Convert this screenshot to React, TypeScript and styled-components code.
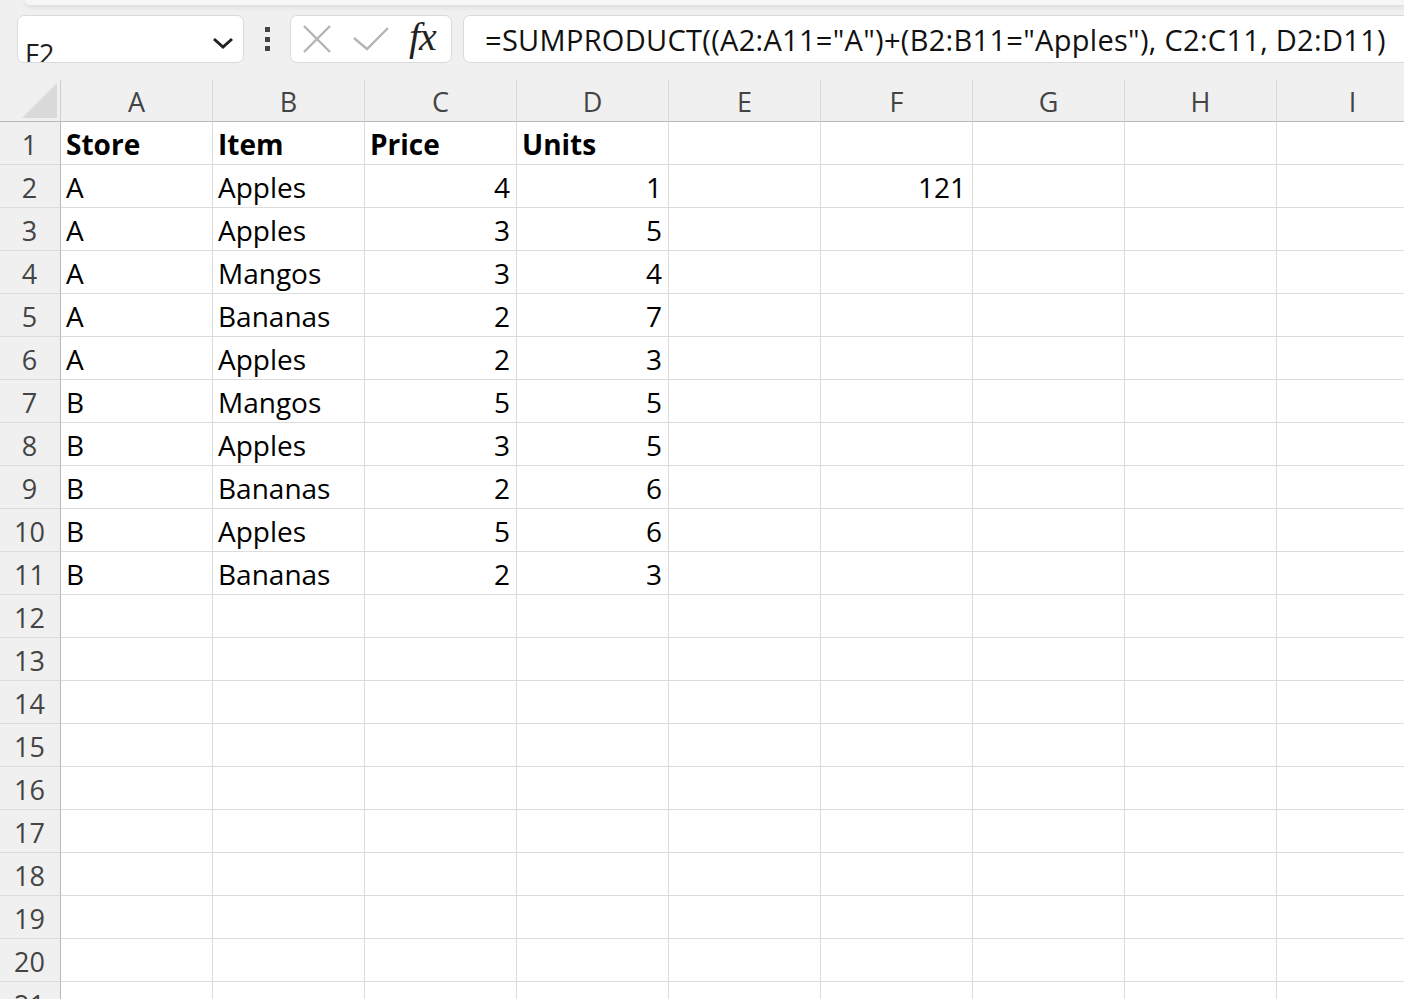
import React from "react";
import styled, { createGlobalStyle } from "styled-components";

const GlobalStyle = createGlobalStyle`
  html, body {
    margin: 0;
    padding: 0;
    background: #f0f0f0;
    overflow: hidden;
  }
  * {
    box-sizing: border-box;
  }
`;

const Sheet = styled.div`
  width: 1404px;
  height: 999px;
  overflow: hidden;
  background: #f0f0f0;
  font-family: "Open Sans", "Noto Sans", sans-serif;
`;

const RibbonEdge = styled.div`
  height: 5px;
  margin-left: 25px;
  background: #f6f6f6;
  border-bottom-left-radius: 6px;
  box-shadow: 0 2px 5px rgba(0, 0, 0, 0.1);
`;

const FormulaBar = styled.div`
  display: flex;
  height: 75px;
  padding: 10px 0 0 17px;
  align-items: flex-start;
`;

const Box = styled.div`
  height: 48px;
  background: #fff;
  border: 1px solid #dadada;
  border-radius: 7px;
  display: flex;
  align-items: center;
  overflow: hidden;
`;

const NameBox = styled(Box)`
  width: 227px;
  position: relative;
  padding-left: 7px;
  align-items: flex-start;
`;

const NameText = styled.span`
  font-size: 27px;
  color: #1e1e1e;
  line-height: 30px;
  margin-top: 23px;
`;

const Chevron = styled.svg`
  position: absolute;
  right: 9px;
  top: 20px;
`;

const Dots = styled.div`
  width: 46px;
  height: 48px;
  display: flex;
  flex-direction: column;
  align-items: center;
  padding-top: 12px;
  gap: 4.5px;
  span {
    width: 5px;
    height: 5px;
    background: #444;
    display: block;
  }
`;

const ActionBox = styled(Box)`
  width: 162px;
  padding-left: 12px;
  gap: 22px;
`;

const FxLabel = styled.span`
  font-family: "Liberation Serif", "DejaVu Serif", serif;
  font-style: italic;
  font-size: 40px;
  color: #222;
  margin-left: -2px;
  line-height: 1;
  margin-top: -4px;
  letter-spacing: -1px;
`;

const FormulaInput = styled(Box)`
  flex: 1;
  margin-left: 11px;
  margin-right: -12px;
  padding-left: 21px;
`;

const FormulaText = styled.span`
  font-family: "Open Sans", "Noto Sans", sans-serif;
  font-size: 29px;
  letter-spacing: 0.3px;
  color: #111;
  white-space: nowrap;
`;

const Grid = styled.div`
  display: grid;
  grid-template-columns: 61px repeat(9, 152px);
  grid-auto-rows: 43px;
  grid-template-rows: 42px;
`;

const Corner = styled.div`
  background: #f0f0f0;
  border-right: 1px solid #d0d0d0;
  border-bottom: 1px solid #b8b8b8;
  position: relative;
  &::after {
    content: "";
    position: absolute;
    right: 3px;
    bottom: 3px;
    width: 0;
    height: 0;
    border-style: solid;
    border-width: 0 0 35px 35px;
    border-color: transparent transparent #dadada transparent;
  }
`;

const ColHeader = styled.div`
  background: #f0f0f0;
  border-right: 1px solid #d8d8d8;
  border-bottom: 1px solid #b8b8b8;
  display: flex;
  align-items: center;
  justify-content: center;
  font-size: 27px;
  color: #444;
  padding-top: 2px;
`;

const RowHeader = styled.div`
  background: #f0f0f0;
  border-right: 1px solid #b8b8b8;
  border-bottom: 1px solid #dcdcdc;
  display: flex;
  align-items: center;
  justify-content: center;
  font-size: 27px;
  color: #444;
  padding: 2px 1px 0 0;
`;

const Cell = styled.div<{ $num?: boolean; $bold?: boolean }>`
  background: #fff;
  border-right: 1px solid #dcdcdc;
  border-bottom: 1px solid #dcdcdc;
  display: flex;
  align-items: center;
  justify-content: ${(p) => (p.$num ? "flex-end" : "flex-start")};
  padding: 2px 6px 0 5px;
  font-size: 28px;
  font-weight: ${(p) => (p.$bold ? 700 : 400)};
  color: #000;
  white-space: nowrap;
  overflow: hidden;
`;

const columns = ["A", "B", "C", "D", "E", "F", "G", "H", "I"];

type Row = { store: string; item: string; price: number; units: number };

const data: Row[] = [
  { store: "A", item: "Apples", price: 4, units: 1 },
  { store: "A", item: "Apples", price: 3, units: 5 },
  { store: "A", item: "Mangos", price: 3, units: 4 },
  { store: "A", item: "Bananas", price: 2, units: 7 },
  { store: "A", item: "Apples", price: 2, units: 3 },
  { store: "B", item: "Mangos", price: 5, units: 5 },
  { store: "B", item: "Apples", price: 3, units: 5 },
  { store: "B", item: "Bananas", price: 2, units: 6 },
  { store: "B", item: "Apples", price: 5, units: 6 },
  { store: "B", item: "Bananas", price: 2, units: 3 },
];

function rowCells(r: number): { text: string; num?: boolean; bold?: boolean }[] {
  const empty = columns.map(() => ({ text: "" }));
  if (r === 1) {
    return [
      { text: "Store", bold: true },
      { text: "Item", bold: true },
      { text: "Price", bold: true },
      { text: "Units", bold: true },
      ...empty.slice(4),
    ];
  }
  const d = data[r - 2];
  if (!d) return empty;
  return [
    { text: d.store },
    { text: d.item },
    { text: String(d.price), num: true },
    { text: String(d.units), num: true },
    { text: "" },
    { text: r === 2 ? "121" : "", num: true },
    ...empty.slice(6),
  ];
}

export default function App() {
  const rows = Array.from({ length: 21 }, (_, i) => i + 1);
  return (
    <Sheet>
      <GlobalStyle />
      <RibbonEdge />
      <FormulaBar>
        <NameBox>
          <NameText>F2</NameText>
          <Chevron width="22" height="14" viewBox="0 0 22 14">
            <polyline points="2,3 11,11 20,3" fill="none" stroke="#222" strokeWidth="3" />
          </Chevron>
        </NameBox>
        <Dots>
          <span />
          <span />
          <span />
        </Dots>
        <ActionBox>
          <svg width="28" height="28" viewBox="0 0 28 28">
            <path d="M1 1 L27 27 M27 1 L1 27" stroke="#b5b5b5" strokeWidth="2.4" fill="none" />
          </svg>
          <svg width="36" height="26" viewBox="0 0 36 26">
            <polyline points="1,12 14,23 35,2" stroke="#b5b5b5" strokeWidth="2.4" fill="none" />
          </svg>
          <FxLabel>fx</FxLabel>
        </ActionBox>
        <FormulaInput>
          <FormulaText>=SUMPRODUCT((A2:A11="A")+(B2:B11="Apples"), C2:C11, D2:D11)</FormulaText>
        </FormulaInput>
      </FormulaBar>
      <Grid>
        <Corner />
        {columns.map((c) => (
          <ColHeader key={c}>{c}</ColHeader>
        ))}
        {rows.map((r) => (
          <React.Fragment key={r}>
            <RowHeader>{r}</RowHeader>
            {rowCells(r).map((cell, i) => (
              <Cell key={i} $num={cell.num} $bold={cell.bold}>
                {cell.text}
              </Cell>
            ))}
          </React.Fragment>
        ))}
      </Grid>
    </Sheet>
  );
}
